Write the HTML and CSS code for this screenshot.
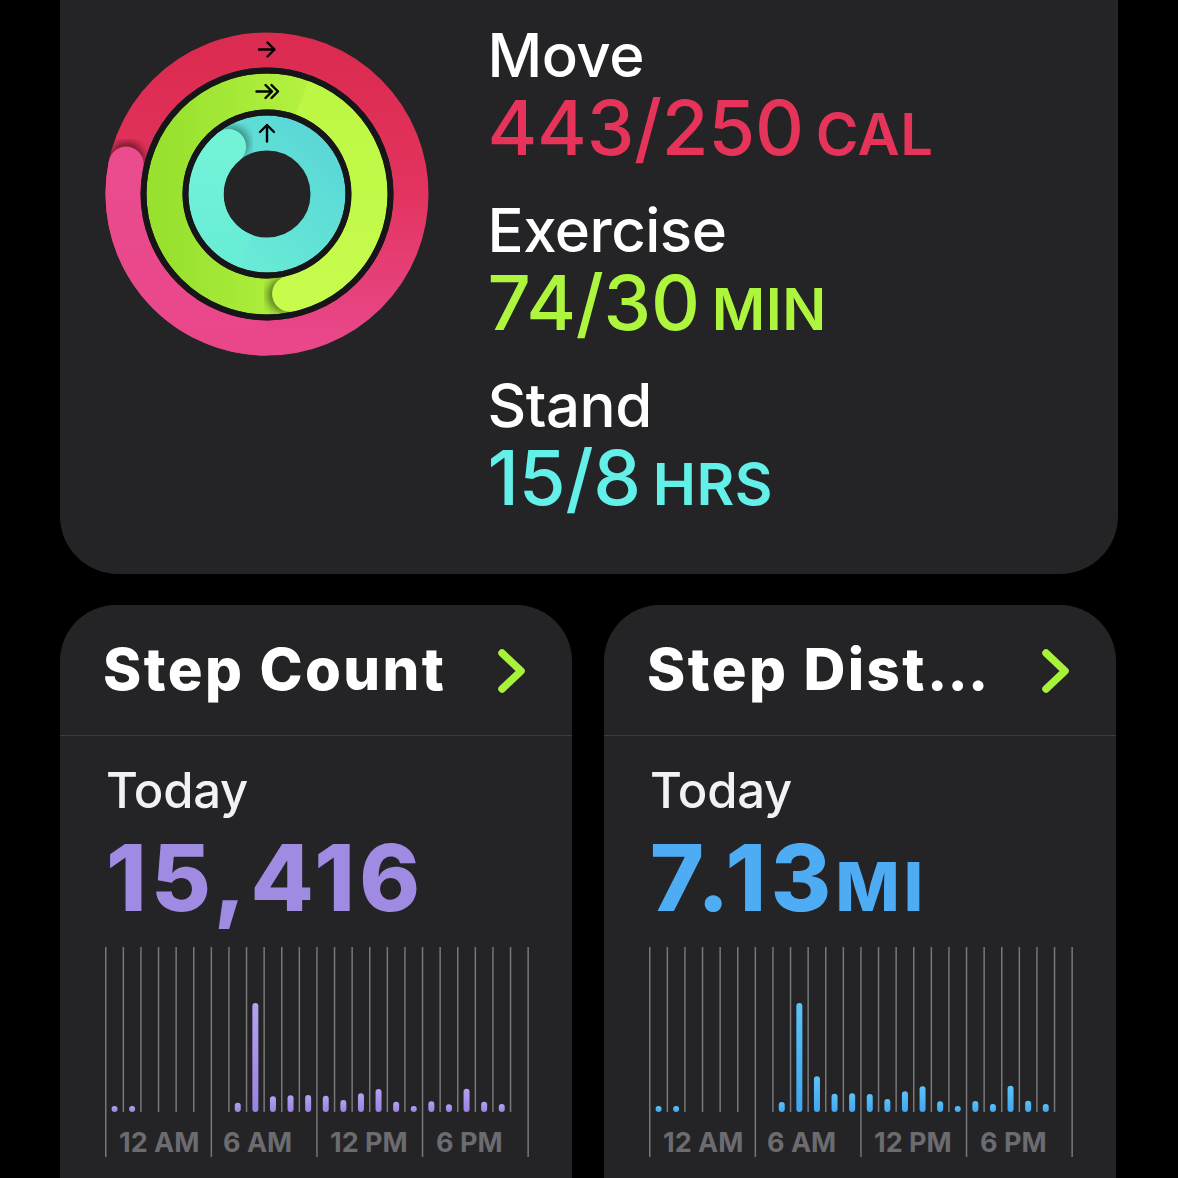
FILE: index.html
```html
<!DOCTYPE html>
<html lang="en">
<head>
<meta charset="utf-8">
<title>Activity</title>
<link rel="stylesheet" href="styles.css">
</head>
<body>
<main class="screen">
  <section class="card rings-card">
    <svg class="rings" viewBox="0 0 340 340" width="340" height="340" aria-hidden="true">
      <defs>
        <linearGradient id="redBase" x1="0" y1="0" x2="0" y2="1">
          <stop offset="0" stop-color="#dc2b50"/>
          <stop offset="0.5" stop-color="#e2345f"/>
          <stop offset="1" stop-color="#e9478a"/>
        </linearGradient>
        <linearGradient id="redTop" x1="0" y1="1" x2="0" y2="0">
          <stop offset="0" stop-color="#e9478a"/>
          <stop offset="1" stop-color="#ea4c8e"/>
        </linearGradient>
        <linearGradient id="greenBase" x1="0" y1="0" x2="1" y2="0">
          <stop offset="0" stop-color="#98e12f"/>
          <stop offset="1" stop-color="#c0f946"/>
        </linearGradient>
        <linearGradient id="greenTop" x1="0" y1="0" x2="0" y2="1">
          <stop offset="0" stop-color="#bdf744"/>
          <stop offset="1" stop-color="#c7fc4d"/>
        </linearGradient>
        <linearGradient id="blueBase" x1="1" y1="0" x2="0" y2="1">
          <stop offset="0" stop-color="#5ad6d6"/>
          <stop offset="1" stop-color="#6aeed6"/>
        </linearGradient>
        <linearGradient id="blueTop" x1="0" y1="1" x2="0" y2="0">
          <stop offset="0" stop-color="#69edd6"/>
          <stop offset="1" stop-color="#72f3d8"/>
        </linearGradient>
        <filter id="soft" x="-50%" y="-50%" width="200%" height="200%">
          <feGaussianBlur stdDeviation="4"/>
        </filter>
        <mask id="maskRed"><circle cx="170" cy="170" r="144" fill="none" stroke="#fff" stroke-width="35"/></mask>
        <mask id="maskGreen"><circle cx="170" cy="170" r="102.5" fill="none" stroke="#fff" stroke-width="36"/></mask>
        <mask id="maskBlue"><circle cx="170" cy="170" r="61" fill="none" stroke="#fff" stroke-width="35"/></mask>
      </defs>

      <!-- Move ring -->
      <circle cx="170" cy="170" r="144" fill="none" stroke="url(#redBase)" stroke-width="35"/>
      <g mask="url(#maskRed)">
        <circle cx="30" cy="136" r="17.5" fill="#000" opacity="0.55" filter="url(#soft)"/>
      </g>
      <path d="M170 314 A144 144 0 0 1 29.15 140.06" fill="none" stroke="url(#redTop)" stroke-width="35"/>
      <circle cx="29.15" cy="140.06" r="17.5" fill="#ea4c8e"/>

      <!-- Exercise ring -->
      <circle cx="170" cy="170" r="102.5" fill="none" stroke="url(#greenBase)" stroke-width="36"/>
      <g mask="url(#maskGreen)">
        <circle cx="188.6" cy="271" r="18" fill="#000" opacity="0.5" filter="url(#soft)"/>
      </g>
      <path d="M205.06 73.68 A102.5 102.5 0 0 1 193.06 269.87" fill="none" stroke="url(#greenTop)" stroke-width="36"/>
      <circle cx="193.06" cy="269.87" r="18" fill="#c7fc4d"/>

      <!-- Stand ring -->
      <circle cx="170" cy="170" r="61" fill="none" stroke="url(#blueBase)" stroke-width="35"/>
      <g mask="url(#maskBlue)">
        <circle cx="134.7" cy="119.6" r="17.5" fill="#000" opacity="0.4" filter="url(#soft)"/>
      </g>
      <path d="M149.14 227.32 A61 61 0 0 1 131.61 122.6" fill="none" stroke="url(#blueTop)" stroke-width="35"/>
      <circle cx="131.61" cy="122.6" r="17.5" fill="#72f3d8"/>

      <!-- separators -->
      <circle cx="170" cy="170" r="123.5" fill="none" stroke="#161618" stroke-width="6"/>
      <circle cx="170" cy="170" r="81.5" fill="none" stroke="#161618" stroke-width="6"/>

      <!-- arrows -->
      <g fill="none" stroke="#000" stroke-width="2.4" stroke-linecap="round" stroke-linejoin="round">
        <path d="M162 25.5 H177.5 M170.5 18.5 L177.5 25.5 L170.5 32.5"/>
        <path d="M159.5 67.5 H175 M168.5 61 L175 67.5 L168.5 74 M174.5 61 L181 67.5 L174.5 74"/>
        <path d="M170 117.5 V101 M163 108 L170 101 L177 108"/>
      </g>
    </svg>

    <div class="goals">
      <div class="goal">
        <div class="goal-label">Move</div>
        <div class="goal-value move">443/250<span class="unit">CAL</span></div>
      </div>
      <div class="goal">
        <div class="goal-label">Exercise</div>
        <div class="goal-value exercise">74/30<span class="unit">MIN</span></div>
      </div>
      <div class="goal">
        <div class="goal-label">Stand</div>
        <div class="goal-value stand">15/8<span class="unit">HRS</span></div>
      </div>
    </div>
  </section>

  <div class="tiles">
    <section class="card tile">
      <header class="tile-head">
        <h2 class="tile-title">Step Count</h2>
        <svg class="chevron" viewBox="0 0 30 46" width="30" height="46" aria-hidden="true"><path d="M5 5 L24 23 L5 41" fill="none" stroke="#a8f23b" stroke-width="7.5" stroke-linecap="round" stroke-linejoin="round"/></svg>
      </header>
      <div class="tile-body">
        <div class="today">Today</div>
        <div class="metric steps">15,416</div>
        <svg class="chart" viewBox="0 0 426 212" width="426" height="212" aria-hidden="true">
          <defs>
            <linearGradient id="purpleBar" x1="0" y1="0" x2="0" y2="1">
              <stop offset="0" stop-color="#b5a2f2"/>
              <stop offset="1" stop-color="#9a82e0"/>
            </linearGradient>
          </defs>
          <path class="grid" d="M18.35 0V165M35.95 0V165M53.55 0V165M71.15 0V165M88.75 0V165M123.95 0V165M141.55 0V165M159.15 0V165M176.75 0V165M194.35 0V165M229.55 0V165M247.15 0V165M264.75 0V165M282.35 0V165M299.95 0V165M335.15 0V165M352.75 0V165M370.35 0V165M387.95 0V165M405.55 0V165"/>
          <path class="grid" d="M0.75 0V210M106.35 0V210M211.95 0V210M317.55 0V210M423.15 0V210"/>
          <g fill="url(#purpleBar)">
            <rect x="6.55" y="159" width="6" height="6" rx="3"/>
            <rect x="24.15" y="159" width="6" height="6" rx="3"/>
            <rect x="129.75" y="155.7" width="6" height="9.3" rx="3"/>
            <rect x="147.35" y="56" width="6" height="109" rx="3"/>
            <rect x="164.95" y="149.3" width="6" height="15.7" rx="3"/>
            <rect x="182.55" y="148.3" width="6" height="16.7" rx="3"/>
            <rect x="200.15" y="148" width="6" height="17" rx="3"/>
            <rect x="217.75" y="148.7" width="6" height="16.3" rx="3"/>
            <rect x="235.35" y="153" width="6" height="12" rx="3"/>
            <rect x="252.95" y="146.3" width="6" height="18.7" rx="3"/>
            <rect x="270.55" y="142" width="6" height="23" rx="3"/>
            <rect x="288.15" y="154.7" width="6" height="10.3" rx="3"/>
            <rect x="305.75" y="159" width="6" height="6" rx="3"/>
            <rect x="323.35" y="154.3" width="6" height="10.7" rx="3"/>
            <rect x="340.95" y="157.3" width="6" height="7.7" rx="3"/>
            <rect x="358.55" y="141.7" width="6" height="23.3" rx="3"/>
            <rect x="376.15" y="154.7" width="6" height="10.3" rx="3"/>
            <rect x="393.75" y="157" width="6" height="8" rx="3"/>
          </g>
          <g class="axis">
            <text x="14" y="205">12 AM</text>
            <text x="118" y="205">6 AM</text>
            <text x="225" y="205">12 PM</text>
            <text x="331" y="205">6 PM</text>
          </g>
        </svg>
      </div>
    </section>

    <section class="card tile">
      <header class="tile-head">
        <h2 class="tile-title">Step Distance</h2>
        <svg class="chevron" viewBox="0 0 30 46" width="30" height="46" aria-hidden="true"><path d="M5 5 L24 23 L5 41" fill="none" stroke="#a8f23b" stroke-width="7.5" stroke-linecap="round" stroke-linejoin="round"/></svg>
      </header>
      <div class="tile-body">
        <div class="today">Today</div>
        <div class="metric distance">7.13<span class="metric-unit">MI</span></div>
        <svg class="chart" viewBox="0 0 426 212" width="426" height="212" aria-hidden="true">
          <defs>
            <linearGradient id="blueBar" x1="0" y1="0" x2="0" y2="1">
              <stop offset="0" stop-color="#5cc4f8"/>
              <stop offset="1" stop-color="#3fa6f0"/>
            </linearGradient>
          </defs>
          <path class="grid" d="M18.35 0V165M35.95 0V165M53.55 0V165M71.15 0V165M88.75 0V165M123.95 0V165M141.55 0V165M159.15 0V165M176.75 0V165M194.35 0V165M229.55 0V165M247.15 0V165M264.75 0V165M282.35 0V165M299.95 0V165M335.15 0V165M352.75 0V165M370.35 0V165M387.95 0V165M405.55 0V165"/>
          <path class="grid" d="M0.75 0V210M106.35 0V210M211.95 0V210M317.55 0V210M423.15 0V210"/>
          <g fill="url(#blueBar)">
            <rect x="6.55" y="159" width="6" height="6" rx="3"/>
            <rect x="24.15" y="159" width="6" height="6" rx="3"/>
            <rect x="129.75" y="155" width="6" height="10" rx="3"/>
            <rect x="147.35" y="56" width="6" height="109" rx="3"/>
            <rect x="164.95" y="129.3" width="6" height="35.7" rx="3"/>
            <rect x="182.55" y="146.7" width="6" height="18.3" rx="3"/>
            <rect x="200.15" y="146.3" width="6" height="18.7" rx="3"/>
            <rect x="217.75" y="147" width="6" height="18" rx="3"/>
            <rect x="235.35" y="152" width="6" height="13" rx="3"/>
            <rect x="252.95" y="144.3" width="6" height="20.7" rx="3"/>
            <rect x="270.55" y="139.3" width="6" height="25.7" rx="3"/>
            <rect x="288.15" y="154.3" width="6" height="10.7" rx="3"/>
            <rect x="305.75" y="159" width="6" height="6" rx="3"/>
            <rect x="323.35" y="154" width="6" height="11" rx="3"/>
            <rect x="340.95" y="157" width="6" height="8" rx="3"/>
            <rect x="358.55" y="138.7" width="6" height="26.3" rx="3"/>
            <rect x="376.15" y="153.7" width="6" height="11.3" rx="3"/>
            <rect x="393.75" y="157" width="6" height="8" rx="3"/>
          </g>
          <g class="axis">
            <text x="14" y="205">12 AM</text>
            <text x="118" y="205">6 AM</text>
            <text x="225" y="205">12 PM</text>
            <text x="331" y="205">6 PM</text>
          </g>
        </svg>
      </div>
    </section>
  </div>
</main>
</body>
</html>
```

FILE: styles.css
```css
* { box-sizing: border-box; }

html, body {
  margin: 0;
  padding: 0;
  background: #000;
}

body {
  font-family: Inter, "Noto Sans", "Liberation Sans", sans-serif;
  color: #fff;
}

.screen {
  width: 1178px;
  height: 1178px;
  overflow: hidden;
}

.card {
  background: #242426;
}

/* ---------- Activity rings card ---------- */
.rings-card {
  margin-left: 60px;
  width: 1058px;
  height: 574px;
  border-radius: 0 0 58px 58px;
  display: flex;
  align-items: flex-start;
}

.rings {
  flex: none;
  display: block;
  margin: 23.5px 0 0 36.5px;
}

.goals {
  margin-left: 51px;
  padding-top: 23px;
  display: flex;
  flex-direction: column;
  gap: 31px;
}

.goal-label {
  font-size: 60px;
  line-height: 64px;
  font-weight: 500;
  letter-spacing: -0.5px;
  color: #fff;
}

.goal-value {
  font-size: 76px;
  line-height: 80px;
  font-weight: 500;
  letter-spacing: -0.3px;
  white-space: nowrap;
}

.goal-value .unit {
  font-size: 58px;
  line-height: 1;
  font-weight: 600;
  margin-left: 12px;
  letter-spacing: 0.5px;
}

.move { color: #e5335a; }
.exercise { color: #aef53e; }
.stand { color: #62f0e8; }

/* ---------- Tiles ---------- */
.tiles {
  display: flex;
  gap: 32px;
  margin: 31px 0 0 60px;
}

.tile {
  width: 512px;
  height: 620px;
  border-radius: 56px 56px 0 0;
}

.tile-head {
  height: 131px;
  display: flex;
  justify-content: space-between;
  align-items: flex-start;
  padding: 29px 45px 0 43px;
  border-bottom: 1px solid #3b3b3e;
}

.tile-title {
  margin: 0;
  font-size: 58px;
  line-height: 70px;
  font-weight: 800;
  letter-spacing: 2.4px;
  max-width: 350px;
  white-space: nowrap;
  overflow: hidden;
  text-overflow: ellipsis;
}

.chevron {
  flex: none;
  display: block;
  margin-top: 14px;
}

.tile-body {
  padding-left: 46px;
}

.today {
  margin-top: 27px;
  font-size: 49px;
  line-height: 56px;
  font-weight: 500;
  letter-spacing: -0.3px;
  color: #f2f2f4;
}

.metric {
  margin-top: 11px;
  font-size: 92px;
  line-height: 96px;
  font-weight: 800;
  letter-spacing: 4.5px;
  white-space: nowrap;
}

.metric.steps { color: #a08be2; }
.metric.distance { color: #4eacf4; }

.metric-unit {
  font-size: 68px;
  line-height: 1;
  letter-spacing: 4px;
  margin-left: 0;
}

.chart {
  display: block;
  margin: 21px 0 0 -1.5px;
  overflow: visible;
}

.chart .grid {
  stroke: #77777b;
  stroke-width: 1.5;
  fill: none;
}

.chart .axis text {
  font-family: Inter, "Noto Sans", sans-serif;
  font-size: 27px;
  font-weight: 700;
  fill: #6b6b70;
}
```
